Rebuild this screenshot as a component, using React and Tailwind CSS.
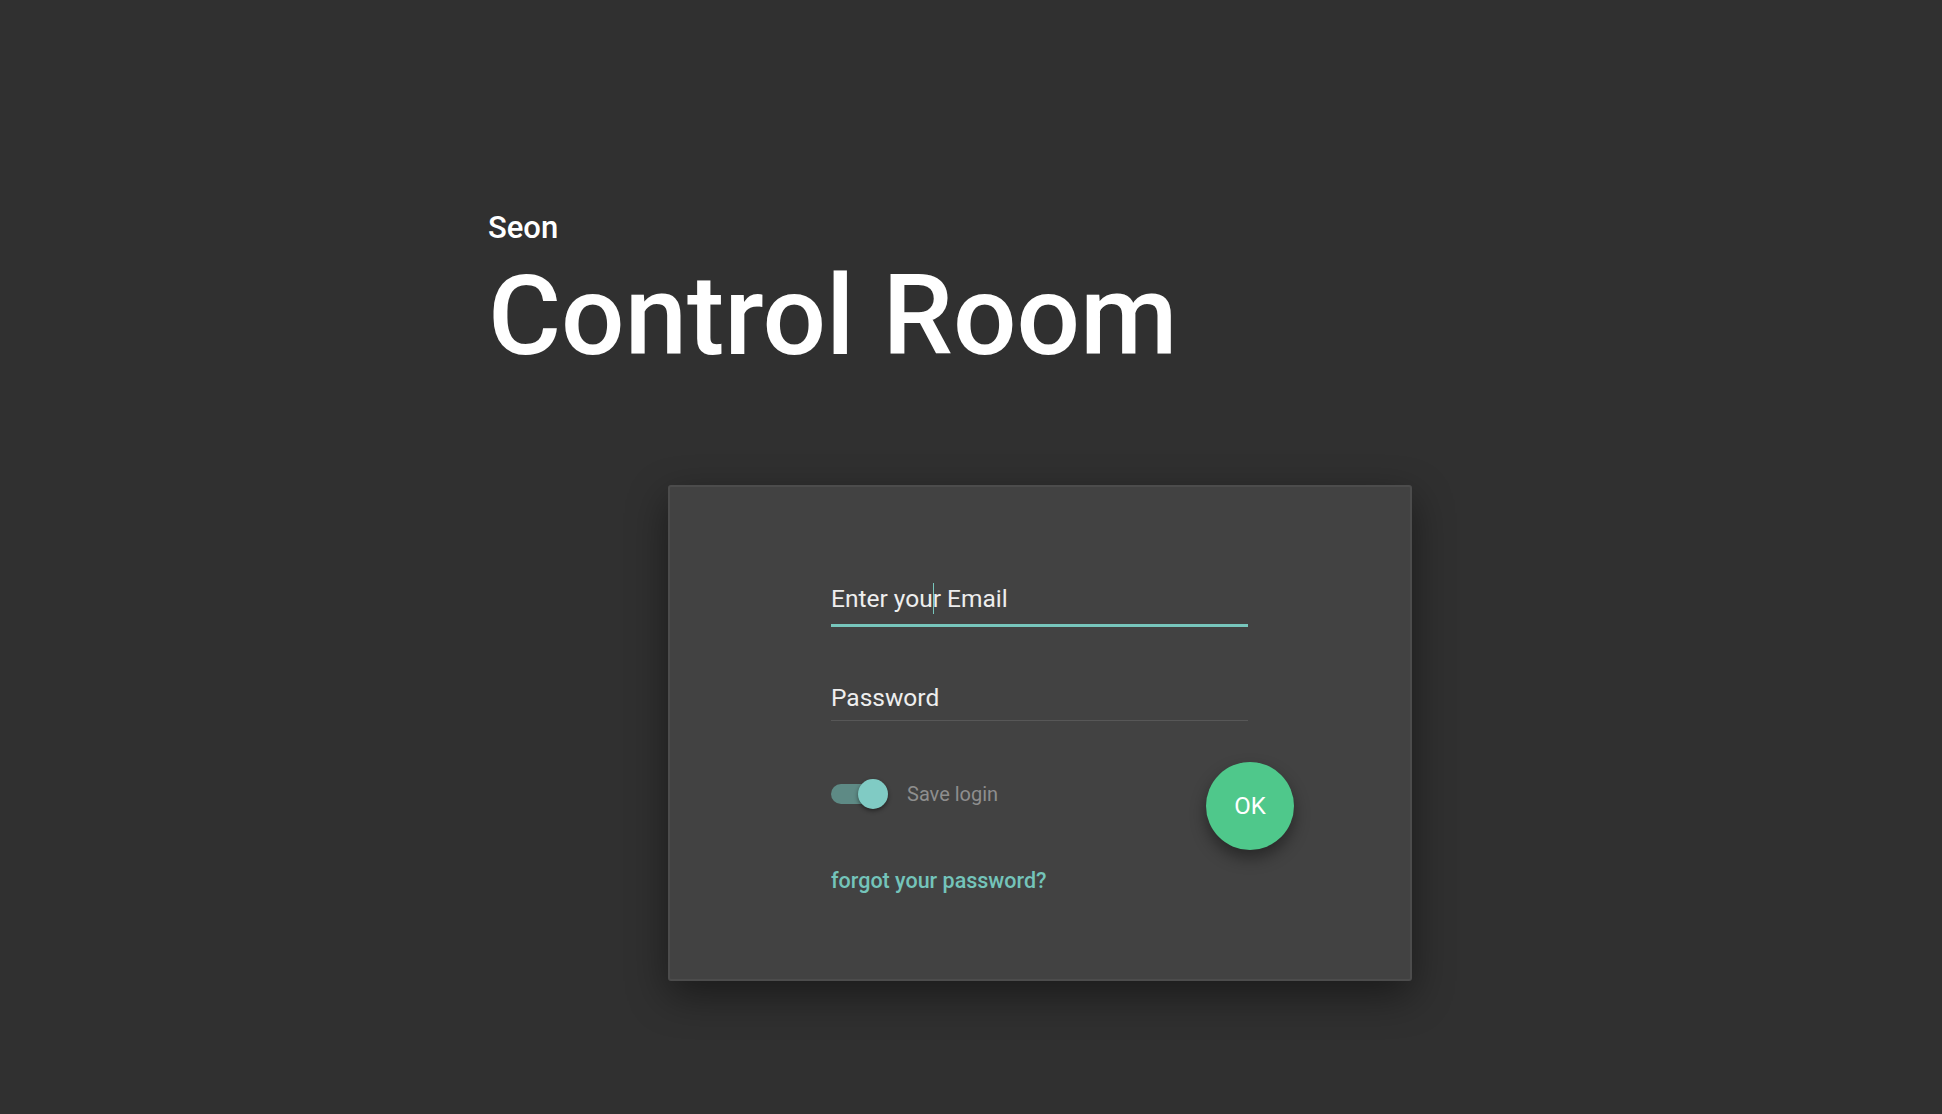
import React, { useState } from 'react'

const Toggle = ({ on, onClick }) => (
    <button type="button" onClick={onClick} className="relative w-[57px] h-[30px] shrink-0">
        <span className="absolute left-0 top-[5px] w-[50px] h-[20px] rounded-full bg-[#5e8a85]" />
        <span
            className={
                on
                    ? 'absolute right-0 top-0 w-[30px] h-[30px] rounded-full bg-[#80cbc4] shadow-[0_2px_4px_rgba(0,0,0,0.45)]'
                    : 'absolute left-0 top-0 w-[30px] h-[30px] rounded-full bg-[#bdbdbd] shadow-[0_2px_4px_rgba(0,0,0,0.45)]'
            }
        />
    </button>
)

const App = () => {
    const [saveLogin, setSaveLogin] = useState(true)

    return (
        <div className="min-h-screen w-full bg-[#303030] font-['Roboto',sans-serif] text-white">
            {/* title */}
            <div className="pl-[488px] pt-[213px]">
                <div className="text-[31px] leading-[30px] font-medium">Seon</div>
                <h1 className="mt-[17px] text-[112px] leading-[112px] font-medium">Control Room</h1>
            </div>

            {/* login card */}
            <div className="ml-[668px] mt-[113px] w-[744px] h-[496px] bg-[#424242] border-2 border-[#4c4c4c] rounded-[3px] shadow-[0_14px_40px_rgba(0,0,0,0.45)]">
                <div className="pl-[161px] pt-[100px]">
                    <div className="w-[417px] pb-[13px] border-b-[3px] border-[#77c6bc] text-[24.5px] leading-[24px] text-[#eeeeee]">
                        Enter you
                        <span className="relative inline-block w-0 h-0">
                            <span className="absolute left-0 -top-[24px] w-px h-[31px] bg-[#77c6bc]" />
                        </span>
                        r Email
                    </div>

                    <div className="mt-[59px] w-[417px] pb-[10px] border-b border-[#575757] text-[24.5px] leading-[24px] text-[#eeeeee]">
                        Password
                    </div>

                    <div className="mt-[41px] w-[463px] flex justify-between items-start">
                        <div className="pt-[17px]">
                            <div className="flex items-center gap-[19px]">
                                <Toggle on={saveLogin} onClick={() => setSaveLogin(!saveLogin)} />
                                <span className="text-[20px] leading-[20px] text-[#8e8e8e]">Save login</span>
                            </div>
                            <div className="mt-[62px] text-[21.5px] leading-[20px] font-medium text-[#74c4ba]">
                                forgot your password?
                            </div>
                        </div>
                        <button
                            type="button"
                            className="w-[88px] h-[88px] rounded-full bg-[#4fc88b] text-[24px] text-white flex items-center justify-center shadow-[0_8px_16px_rgba(0,0,0,0.4)]"
                        >
                            OK
                        </button>
                    </div>
                </div>
            </div>
        </div>
    )
}

export default App
